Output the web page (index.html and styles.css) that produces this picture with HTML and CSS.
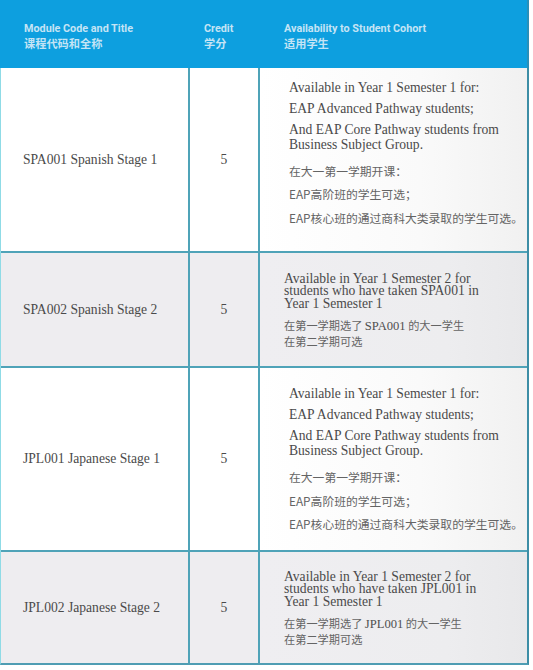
FILE: index.html
```html
<!DOCTYPE html>
<html lang="zh">
<head>
<meta charset="utf-8">
<link rel="stylesheet" href="styles.css">
</head>
<body>
<div class="sheet">
  <div class="head">
    <div class="h-col h-title">
      <div class="h-en">Module Code and Title</div>
      <div class="h-zh">课程代码和全称</div>
    </div>
    <div class="h-col h-credit">
      <div class="h-en">Credit</div>
      <div class="h-zh">学分</div>
    </div>
    <div class="h-col h-avail">
      <div class="h-en">Availability to Student Cohort</div>
      <div class="h-zh">适用学生</div>
    </div>
  </div>
  <div class="grid">
    <div class="cell name">SPA001 Spanish Stage 1</div>
    <div class="cell credit">5</div>
    <div class="cell avail">
      <div class="long raise">
        <p class="en">Available in Year 1 Semester 1 for:</p>
        <p class="en">EAP Advanced Pathway students;</p>
        <p class="en">And EAP Core Pathway students from Business Subject Group.</p>
        <p class="zh zh-first">在大一第一学期开课：</p>
        <p class="zh">EAP高阶班的学生可选；</p>
        <p class="zh">EAP核心班的通过商科大类录取的学生可选。</p>
      </div>
    </div>

    <div class="cell name alt">SPA002 Spanish Stage 2</div>
    <div class="cell credit alt">5</div>
    <div class="cell avail alt">
      <div class="short">
        <p class="en-tight">Available in Year 1 Semester 2 for students who have taken SPA001 in Year 1 Semester 1</p>
        <p class="zh-tight">在第一学期选了 <span class="latin">SPA001</span> 的大一学生<br>在第二学期可选</p>
      </div>
    </div>

    <div class="cell name">JPL001 Japanese Stage 1</div>
    <div class="cell credit">5</div>
    <div class="cell avail">
      <div class="long">
        <p class="en">Available in Year 1 Semester 1 for:</p>
        <p class="en">EAP Advanced Pathway students;</p>
        <p class="en">And EAP Core Pathway students from Business Subject Group.</p>
        <p class="zh zh-first">在大一第一学期开课：</p>
        <p class="zh">EAP高阶班的学生可选；</p>
        <p class="zh">EAP核心班的通过商科大类录取的学生可选。</p>
      </div>
    </div>

    <div class="cell name alt">JPL002 Japanese Stage 2</div>
    <div class="cell credit alt">5</div>
    <div class="cell avail alt">
      <div class="short">
        <p class="en-tight">Available in Year 1 Semester 2 for students who have taken JPL001 in Year 1 Semester 1</p>
        <p class="zh-tight">在第一学期选了 <span class="latin">JPL001</span> 的大一学生<br>在第二学期可选</p>
      </div>
    </div>
  </div>
</div>
</body>
</html>
```

FILE: styles.css
```css
html, body {
  margin: 0;
  padding: 0;
  background: #ffffff;
}

.sheet {
  width: 529px;
}

.head {
  height: 68px;
  background: #0d9fdf;
  display: flex;
  align-items: flex-start;
  box-sizing: border-box;
  padding-top: 22px;
  border-right: 2px solid #2a8fb8;
}

.h-col {
  font-family: "Roboto", "Noto Sans CJK SC", sans-serif;
  font-weight: 700;
  color: #c4e4f5;
}

.h-title { padding-left: 24px; width: 180px; }
.h-credit { width: 80px; }

.h-en {
  font-size: 10.8px;
  line-height: 14px;
}

.h-zh {
  font-family: "Noto Sans CJK SC", sans-serif;
  font-size: 11.2px;
  line-height: 15px;
  font-weight: 700;
}

.grid {
  display: grid;
  grid-template-columns: 187px 68px 267px;
  grid-template-rows: 183px 113px 182px 111px;
  column-gap: 2px;
  row-gap: 2px;
  background: #4fa3b8;
  border-left: 1px solid #8fdbe6;
  border-right: 2px solid #3d8ea6;
  border-bottom: 2px solid #4f9db3;
}

.cell {
  background: #ffffff;
  font-family: "Liberation Serif", "Noto Sans CJK SC", serif;
  color: #4a4a4a;
  display: flex;
  align-items: center;
  box-sizing: border-box;
}

.cell.alt {
  background: #eeedf0;
}

.avail {
  background: linear-gradient(90deg, #ffffff 0%, #fafafa 60%, #f1f1f1 100%);
}

.avail.alt {
  background: linear-gradient(90deg, #efeef1 0%, #ededef 70%, #e8e8ea 100%);
}

.name {
  padding-left: 22px;
  font-size: 13.6px;
}

.credit {
  justify-content: center;
  font-size: 13.6px;
}

.long {
  padding-left: 29px;
  padding-right: 8px;
  margin-top: -1px;
}

.long.raise {
  margin-top: -15px;
}

.short {
  padding-left: 24px;
  width: 232px;
  box-sizing: border-box;
  margin-top: 2px;
}

p { margin: 0; }

.en {
  font-size: 13.6px;
  line-height: 15px;
  margin-bottom: 6px;
}

.zh {
  font-family: "Noto Sans CJK SC", sans-serif;
  font-size: 11.8px;
  line-height: 15px;
  color: #646464;
  margin-bottom: 8.5px;
  white-space: nowrap;
}

.zh-first {
  margin-top: 11px;
}

.zh:last-child { margin-bottom: 0; }

.en-tight {
  font-size: 13.6px;
  line-height: 12.5px;
}

.zh-tight {
  font-family: "Noto Sans CJK SC", sans-serif;
  font-size: 11.2px;
  line-height: 14.5px;
  color: #646464;
  margin-top: 8px;
}

.latin {
  font-family: "Liberation Serif", serif;
  font-size: 12.6px;
  color: #4f4f4f;
}
```
